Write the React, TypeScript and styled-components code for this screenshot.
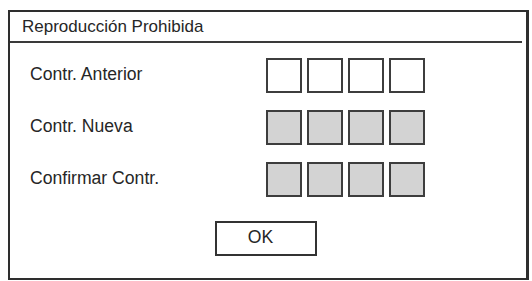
import * as React from 'react'
import styled, { createGlobalStyle } from 'styled-components'

const GlobalStyle = createGlobalStyle`
  html, body {
    margin: 0;
    padding: 0;
    background: #ffffff;
  }
  body {
    font-family: 'Liberation Sans', Arial, sans-serif;
    color: #262626;
  }
`

const Frame = styled.div`
  box-sizing: border-box;
  margin: 10px 0 0 8px;
  width: 521px;
  height: 270px;
  border: 2px solid #2e2e2e;
  border-right-width: 3px;
  display: flex;
  flex-direction: column;
`

const TitleBar = styled.div`
  height: 29px;
  line-height: 29px;
  padding-left: 12px;
  font-size: 17px;
  border-bottom: 2px solid #3a3a3a;
  margin-right: 4px;
`

const Body = styled.div`
  display: flex;
  flex-direction: column;
  gap: 17px;
  padding: 15px 0 0 20px;
`

const Row = styled.div`
  display: grid;
  grid-template-columns: 236px auto;
  align-items: center;
  height: 35px;
`

const Label = styled.span`
  font-size: 17.6px;
  padding-bottom: 3px;
`

const Digits = styled.div`
  display: flex;
  gap: 5px;
`

const DigitBox = styled.div<{ $filled?: boolean }>`
  box-sizing: border-box;
  width: 36px;
  height: 35px;
  border: 2px solid #3d3d3d;
  background: ${p => (p.$filled ? '#d3d3d3' : '#ffffff')};
`

const ButtonRow = styled.div`
  display: flex;
  justify-content: center;
  padding-right: 25px;
  margin-top: 7px;
`

const OkButton = styled.button`
  box-sizing: border-box;
  width: 102px;
  height: 35px;
  border: 2px solid #333;
  background: #fff;
  font-family: 'Liberation Sans', Arial, sans-serif;
  font-size: 17.6px;
  color: #262626;
  padding: 0 10px 2px 0;
`

const rows = [
  { label: 'Contr. Anterior', filled: false },
  { label: 'Contr. Nueva', filled: true },
  { label: 'Confirmar Contr.', filled: true }
]

export default function App() {
  return (
    <>
      <GlobalStyle />
      <Frame>
        <TitleBar>Reproducción Prohibida</TitleBar>
        <Body>
          {rows.map(r => (
            <Row key={r.label}>
              <Label>{r.label}</Label>
              <Digits>
                {[0, 1, 2, 3].map(i => (
                  <DigitBox key={i} $filled={r.filled} />
                ))}
              </Digits>
            </Row>
          ))}
          <ButtonRow>
            <OkButton>OK</OkButton>
          </ButtonRow>
        </Body>
      </Frame>
    </>
  )
}
